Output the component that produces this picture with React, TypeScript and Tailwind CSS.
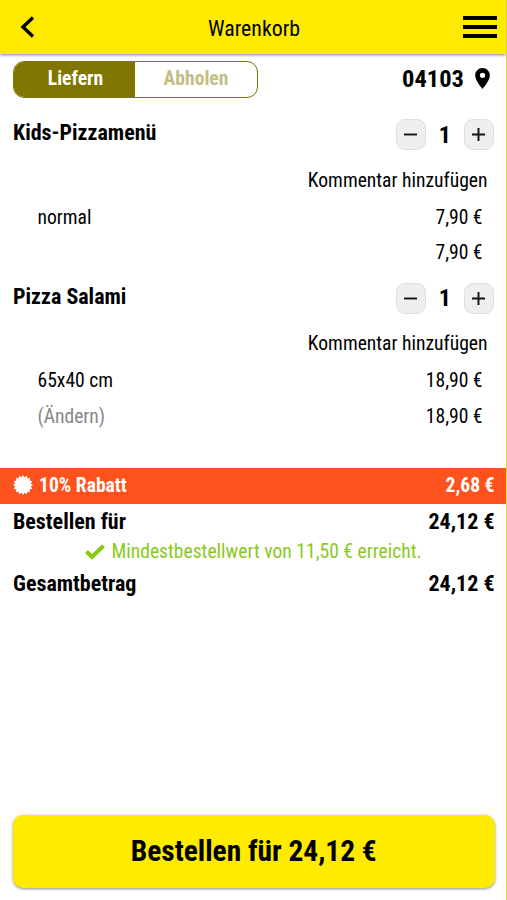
import { ReactNode } from "react";

type Item = {
  name: string;
  count: number;
  option: string;
  price: string;
  total: string;
  editable?: boolean;
};

const items: Item[] = [
  { name: "Kids-Pizzamenü", count: 1, option: "normal", price: "7,90 €", total: "7,90 €" },
  {
    name: "Pizza Salami",
    count: 1,
    option: "65x40 cm",
    price: "18,90 €",
    total: "18,90 €",
    editable: true
  }
];

// 16-pointed seal used in front of the discount line
const sealPoints = Array.from({ length: 32 }, (_, i) => {
  const r = i % 2 === 0 ? 10 : 8;
  const a = (i * Math.PI) / 16;
  return `${(10 + r * Math.sin(a)).toFixed(2)},${(10 - r * Math.cos(a)).toFixed(2)}`;
}).join(" ");

function StepButton({ label, children }: { label: string; children: ReactNode }) {
  return (
    <button
      type="button"
      aria-label={label}
      className="grid h-[31px] w-[30.500px] place-items-center rounded-[9px] border border-[#dfdfdf] bg-[#efefef]"
    >
      <svg width="15" height="15" viewBox="0 0 15 15" stroke="#111" strokeWidth="1.9">
        {children}
      </svg>
    </button>
  );
}

function CartItem({ item }: { item: Item }) {
  return (
    <section className="h-[163.5px]">
      <div className="flex h-[42px] items-center justify-between pl-[13px] pr-3">
        <h2 className="-mt-1 text-[22px] font-bold">{item.name}</h2>
        <div className="-mt-px flex items-center">
          <StepButton label="Weniger">
            <path d="M1 7.5h13" />
          </StepButton>
          <span className="w-[37.500px] text-center text-[24px] font-bold">{item.count}</span>
          <StepButton label="Mehr">
            <path d="M1 7.5h13M7.5 1v13" />
          </StepButton>
        </div>
      </div>
      <div className="flex h-[47px] items-center justify-end pr-[18.500px] pt-0.5">
        <button type="button">Kommentar hinzufügen</button>
      </div>
      <div className="flex h-[27px] items-center justify-between pl-[37.500px] pr-[23.500px] pt-0.5">
        <span>{item.option}</span>
        <span>{item.price}</span>
      </div>
      <div className="flex h-[44px] items-center justify-between pl-[37.500px] pr-[23.500px] pt-0.5">
        <span className="text-[#888]">{item.editable ? "(Ändern)" : ""}</span>
        <span>{item.total}</span>
      </div>
    </section>
  );
}

export default function App() {
  return (
    <main className="flex h-[900px] w-[507px] flex-col overflow-hidden whitespace-nowrap border-r border-[#e3d43c] bg-white font-['Roboto_Condensed','Roboto',sans-serif] text-[19.600px] leading-none text-black [font-stretch:75%]">
      <header className="flex h-[54px] shrink-0 items-center justify-between bg-[#ffeb00] pl-5 pr-[9px] shadow-[0_1px_3px_rgba(0,0,0,0.5)]">
        <svg width="25" height="24" viewBox="0 0 25 24" fill="none" stroke="#000" strokeWidth="3.4">
          <path d="M13 2.500 3 12l10 9.500" />
        </svg>
        <h1 className="pt-1 text-[21.800px]">Warenkorb</h1>
        <svg width="34" height="24" viewBox="0 0 34 24" fill="#000">
          <path d="M0 1h34v4H0zM0 10h34v4H0zM0 19h34v4H0z" />
        </svg>
      </header>

      <div className="mt-[6px] flex h-[38px] shrink-0 items-center justify-between pl-[13px] pr-4">
        <div className="flex h-[37px] w-[245px] overflow-hidden rounded-[11px] border border-[#7f7500] text-[19.600px] font-bold">
          <button type="button" className="w-[121px] bg-[#7f7500] pl-0.5 text-white">
            Liefern
          </button>
          <button type="button" className="flex-1 text-[#c3bd86]">
            Abholen
          </button>
        </div>
        <div className="flex items-center gap-[11px]">
          <span className="text-[24.500px] font-bold">04103</span>
          <svg className="-mt-0.5" width="15" height="21" viewBox="5 2 14 20" fill="#000">
            <path d="M12 2C8.130 2 5 5.130 5 9c0 5.250 7 13 7 13s7-7.750 7-13c0-3.870-3.130-7-7-7zm0 9.500a2.500 2.500 0 0 1 0-5 2.500 2.500 0 0 1 0 5z" />
          </svg>
        </div>
      </div>

      <div className="mt-4 h-[353.5px] shrink-0">
        {items.map((item) => (
          <CartItem key={item.name} item={item} />
        ))}
      </div>

      <div className="flex h-[36.500px] shrink-0 items-center justify-between bg-[#fd521d] pl-[13px] pr-[11.500px] font-bold text-white">
        <span className="flex items-center gap-[6px]">
          <svg className="-mt-0.5" width="20" height="20" viewBox="0 0 20 20" fill="#fff">
            <polygon points={sealPoints} />
          </svg>
          10% Rabatt
        </span>
        <span>2,68 €</span>
      </div>

      <div className="flex h-[34px] shrink-0 items-center justify-between pl-[13px] pr-[11.500px] pt-0.5 text-[22px] font-bold">
        <span>Bestellen für</span>
        <span>24,12 €</span>
      </div>
      <div className="flex h-[27px] shrink-0 items-center justify-center gap-[6px] pl-px text-[#8bc921]">
        <svg width="20" height="16" viewBox="0 0 20 16" fill="none" stroke="#86c90f" strokeWidth="4">
          <path d="M1.500 7.500 7 13 18.500 1.700" />
        </svg>
        <span>Mindestbestellwert von 11,50 € erreicht.</span>
      </div>
      <div className="flex h-[36px] shrink-0 items-center justify-between pl-[13px] pr-[11.500px] pt-0.5 text-[22px] font-bold">
        <span>Gesamtbetrag</span>
        <span>24,12 €</span>
      </div>

      <button
        type="button"
        className="mb-3 ml-[13px] mr-[11.500px] mt-auto h-[73px] shrink-0 rounded-[10px] bg-[#ffeb00] text-[29.400px] font-bold shadow-[0_1px_3px_rgba(0,0,0,0.45)]"
      >
        Bestellen für 24,12 €
      </button>
    </main>
  );
}
